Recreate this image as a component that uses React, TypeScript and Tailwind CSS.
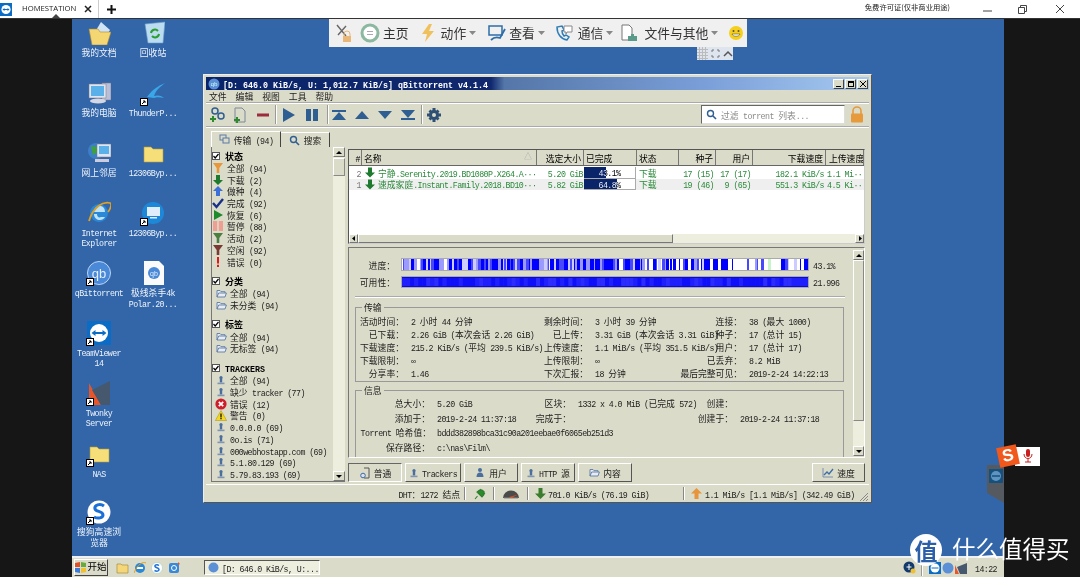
import React from "react";

const CJK = /([\u3000-\u9fff\uff00-\uffef]+)/;
const T = ({ s, className = "", b = false }: { s: string; className?: string; b?: boolean }) => {
  const parts = s.split(CJK).filter(Boolean);
  return (
    <span className={`whitespace-pre ${b ? "font-bold" : ""} ${className}`}>
      {parts.map((p, i) =>
        /[\u3000-\u9fff\uff00-\uffef]/.test(p) ? (
          <span key={i} className={b ? "text-[9px]" : "text-[8.8px]"}>{p}</span>
        ) : (
          <span key={i} className={b ? "text-[8.33px]" : "text-[8.3px] tracking-[-0.58px]"}>{p}</span>
        )
      )}
    </span>
  );
};

const rnd = (seed: number) => {
  let x = seed;
  return () => {
    x = (x * 16807) % 2147483647;
    return x / 2147483647;
  };
};

const ProgressBar = () => {
  const r = rnd(4242);
  const bars: { x: number; w: number; c: string }[] = [];
  let x = 0;
  while (x < 406) {
    const w = 1 + Math.floor(r() * (x > 320 ? 4 : 3));
    const dens = x < 240 ? 0.85 : x < 325 ? 0.6 : 0.22;
    const v = r();
    const inWhite = (x > 332 && x < 345) || (x > 360 && x < 372);
    let c = "#ffffff";
    if (!inWhite) {
      if (v < dens * 0.5) c = "#0000ff";
      else if (v < dens * 0.75) c = "#4848ff";
      else if (v < dens) c = "#9a9aff";
      else if (v < dens + 0.12) c = "#ccccff";
    }
    bars.push({ x, w, c });
    x += w;
  }
  return (
    <svg width="406" height="11" className="block">
      <rect width="406" height="11" fill="#fff" />
      {bars.map((b, i) => (
        <rect key={i} x={b.x} y="0" width={b.w} height="11" fill={b.c} />
      ))}
      <rect x="366" y="0" width="3" height="11" fill="#c8f5c8" />
    </svg>
  );
};

const AvailBar = () => {
  const r = rnd(77);
  const bars = Array.from({ length: 100 }, (_, i) => ({
    x: i * 4.06,
    c: r() > 0.7 ? "#2c2cff" : r() > 0.5 ? "#1010f8" : "#2020fc",
  }));
  return (
    <svg width="406" height="10" className="block">
      <rect width="406" height="10" fill="#2222fc" />
      {bars.map((b, i) => (
        <rect key={i} x={b.x} y="0" width="4.06" height="10" fill={b.c} />
      ))}
      <rect y="0" width="406" height="1" fill="#0a0ad8" />
      <rect y="9" width="406" height="1" fill="#0a0ad8" />
    </svg>
  );
};

const Check = () => (
  <span className="w-[8px] h-[8px] bg-white border border-[#555] flex items-center justify-center shrink-0">
    <svg width="6" height="6" viewBox="0 0 6 6"><path d="M0.5 3l1.7 2L5.5 1" stroke="#000" strokeWidth="1.2" fill="none" /></svg>
  </span>
);

const Folder = () => (
  <svg width="11" height="9" viewBox="0 0 11 9"><path d="M1 8V1.5h3l1 1.2h4V4M1 8l1.7-4H10.4L9 8z" fill="#e8ecf2" stroke="#5c7aa5" strokeWidth="0.9" /></svg>
);
const Person = () => (
  <svg width="10" height="10" viewBox="0 0 10 10"><circle cx="5" cy="2.5" r="1.6" fill="#4a6f9c" /><rect x="3.8" y="3" width="2.4" height="4.5" fill="#4a6f9c" /><rect x="1.5" y="7.6" width="7" height="1.6" fill="#7f95b3" /></svg>
);

type Ic = { k: string };
const StatusIcon = ({ k }: Ic) => {
  const p: Record<string, React.ReactNode> = {
    all: <path d="M1 1h10L7.3 6v5H4.7V6z" fill="#e8963a" />,
    down: <path d="M4 1h4v5h3L6 11 1 6h3z" fill="#1d7a2e" />,
    up: <path d="M6 1l5 5H8v5H4V6H1z" fill="#3d6fd8" />,
    done: <path d="M1 6l3.5 4L11 2" stroke="#1a2f8a" strokeWidth="2.4" fill="none" />,
    resume: <path d="M2 1l9 5-9 5z" fill="#1f8a2c" />,
    pause: <path d="M1 1h4.2v10H1zM6.8 1H11v10H6.8z" fill="#ee9e92" />,
    active: <path d="M1 1h10L7.3 6v5H4.7V6z" fill="#4b7f42" />,
    idle: <path d="M1 1h10L7.3 6v5H4.7V6z" fill="#7a3a34" />,
    err: <path d="M5 1h2v6.4H5zM5 8.8h2V11H5z" fill="#e01818" />,
  };
  return <svg width="12" height="12" viewBox="0 0 12 12">{p[k]}</svg>;
};

const Row = ({ icon, text, iw = "w-[18px] justify-center" }: { icon: React.ReactNode; text: string; iw?: string }) => (
  <div className="h-[11.72px] flex items-center leading-none">
    <span className={`${iw} flex items-center shrink-0`}>{icon}</span>
    <T s={text} className="text-[#222]" />
  </div>
);

const Sect = ({ title, mt = "mt-[7px]" }: { title: string; mt?: string }) => (
  <div className={`h-[13px] flex items-center gap-[5px] ${mt}`}>
    <Check />
    <T s={title} b className="text-black" />
  </div>
);

const SI = "w-[15px] justify-start";

const Sidebar = () => (
  <div className="w-[134px] flex h-full">
    <div className="w-[122px] border-l border-b border-[#777] overflow-hidden pt-[2px]">
      <Sect title="状态" mt="mt-0" />
      <Row iw={SI} icon={<StatusIcon k="all" />} text="全部 (94)" />
      <Row iw={SI} icon={<StatusIcon k="down" />} text="下载 (2)" />
      <Row iw={SI} icon={<StatusIcon k="up" />} text="做种 (4)" />
      <Row iw={SI} icon={<StatusIcon k="done" />} text="完成 (92)" />
      <Row iw={SI} icon={<StatusIcon k="resume" />} text="恢复 (6)" />
      <Row iw={SI} icon={<StatusIcon k="pause" />} text="暂停 (88)" />
      <Row iw={SI} icon={<StatusIcon k="active" />} text="活动 (2)" />
      <Row iw={SI} icon={<StatusIcon k="idle" />} text="空闲 (92)" />
      <Row iw={SI} icon={<StatusIcon k="err" />} text="错误 (0)" />
      <Sect title="分类" />
      <Row icon={<Folder />} text="全部 (94)" />
      <Row icon={<Folder />} text="未分类 (94)" />
      <Sect title="标签" />
      <Row icon={<Folder />} text="全部 (94)" />
      <Row icon={<Folder />} text="无标签 (94)" />
      <Sect title="TRACKERS" />
      <Row icon={<Person />} text="全部 (94)" />
      <Row icon={<Person />} text="缺少 tracker (77)" />
      <Row
        icon={<svg width="12" height="12" viewBox="0 0 12 12"><circle cx="6" cy="6" r="5.6" fill="#cc1f2a" /><path d="M3.8 3.8l4.4 4.4M8.2 3.8L3.8 8.2" stroke="#fff" strokeWidth="1.7" /></svg>}
        text="错误 (12)"
      />
      <Row
        icon={<svg width="12" height="11" viewBox="0 0 12 11"><path d="M6 .5l5.6 10H.4z" fill="#f5d820" stroke="#a08a10" strokeWidth=".5" /><path d="M5.4 3.4h1.2v4H5.4zM5.4 8h1.2v1.2H5.4z" fill="#000" /></svg>}
        text="警告 (0)"
      />
      <Row icon={<Person />} text="0.0.0.0 (69)" />
      <Row icon={<Person />} text="0o.is (71)" />
      <Row icon={<Person />} text="000webhostapp.com (69)" />
      <Row icon={<Person />} text="5.1.80.129 (69)" />
      <Row icon={<Person />} text="5.79.83.193 (69)" />
    </div>
    <div className="w-[12px] flex flex-col bg-[#eeeedf] border-b border-[#777]">
      <ScrollBtn dir="up" />
      <div className="h-[18px] mt-[1px] bg-[#dbdbc9] border border-t-white border-l-white border-r-[#888] border-b-[#888]" />
      <div className="flex-1" />
      <ScrollBtn dir="down" />
    </div>
  </div>
);

const ScrollBtn = ({ dir }: { dir: "up" | "down" | "left" | "right" }) => {
  const d = { up: "M1 5l3-3 3 3z", down: "M1 2l3 3 3-3z", left: "M5 1L2 4l3 3z", right: "M3 1l3 3-3 3z" }[dir];
  return (
    <div className="w-full h-[10px] shrink-0 bg-[#dbdbc9] border border-t-white border-l-white border-r-[#777] border-b-[#777] flex items-center justify-center">
      <svg width="8" height="7" viewBox="0 0 8 7"><path d={d} fill="#000" /></svg>
    </div>
  );
};

const cols = [
  { t: "#", w: "w-[13px]", a: "justify-end pr-[1px]" },
  { t: "名称", w: "w-[175px]", a: "justify-start pl-[2px]" },
  { t: "选定大小", w: "w-[47px]", a: "justify-end pr-[2px]" },
  { t: "已完成", w: "w-[53px]", a: "justify-start pl-[2px]" },
  { t: "状态", w: "w-[42px]", a: "justify-start pl-[2px]" },
  { t: "种子", w: "w-[37px]", a: "justify-end pr-[2px]" },
  { t: "用户", w: "w-[37px]", a: "justify-end pr-[2px]" },
  { t: "下载速度", w: "w-[73px]", a: "justify-end pr-[2px]" },
  { t: "上传速度", w: "w-[38px]", a: "justify-start pl-[3px]" },
];

const Pct = ({ pct, label }: { pct: number; label: string }) => (
  <div
    className="w-[52px] h-full border-r border-b border-[#aaa] text-center leading-[11px]"
    style={{ backgroundImage: `linear-gradient(90deg,#0a246a ${pct}%,#fff ${pct}%)` }}
  >
    <div
      className="w-full bg-clip-text text-transparent"
      style={{ backgroundImage: `linear-gradient(90deg,#fff ${pct}%,#000 ${pct}%)` }}
    >
      <T s={label} />
    </div>
  </div>
);

const TorrentRow = ({ d, bg }: { d: any; bg: string }) => (
  <div className={`flex h-[11.6px] items-center text-[#2a8a3a] leading-none ${bg}`}>
    <span className="w-[13px] text-right pr-[1px] text-[#777]"><T s={d.n} /></span>
    <span className="w-[175px] flex items-center pl-[3px] overflow-hidden">
      <svg width="10" height="11" viewBox="0 0 10 11" className="shrink-0 mr-[3px]"><path d="M3 .5h4v5h3L5 10.5 0 5.5h3z" fill="#1d7a2e" /></svg>
      <T s={d.name} />
    </span>
    <span className="w-[47px] text-right pr-[1px]"><T s={d.size} /></span>
    <span className="w-[53px] h-full"><Pct pct={d.pct} label={d.label} /></span>
    <span className="w-[42px] pl-[2px]"><T s="下载" /></span>
    <span className="w-[37px] text-right pr-[2px]"><T s={d.seeds} /></span>
    <span className="w-[37px] text-right pr-[2px]"><T s={d.peers} /></span>
    <span className="w-[73px] text-right pr-[2px]"><T s={d.dl} /></span>
    <span className="w-[38px] pl-[1px] overflow-hidden"><T s={d.ul} /></span>
  </div>
);

const TorrentList = () => (
  <div className="h-[95px] mt-[2px] border border-t-[#555] border-l-[#555] border-r-[#ccc] border-b-[#ccc] bg-white flex flex-col">
    <div className="flex h-[16px] bg-[#dbdbc9] border-b border-[#666] shrink-0">
      {cols.map((c, i) => (
        <div key={i} className={`${c.w} ${c.a} flex items-center border-r border-[#777] shrink-0 relative text-black overflow-hidden leading-none`}>
          <T s={c.t} />
          {i === 1 && <span className="absolute right-[4px] top-[3px] text-[8px] text-[#aaa]">△</span>}
        </div>
      ))}
    </div>
    <div className="flex-1 pt-[1px]">
      <TorrentRow
        bg="bg-white"
        d={{ n: "2", name: "宁静.Serenity.2019.BD1080P.X264.A···", size: "5.20 GiB", pct: 43.1, label: "43.1%", seeds: "17 (15)", peers: "17 (17)", dl: "182.1 KiB/s", ul: "1.1 Mi··" }}
      />
      <TorrentRow
        bg="bg-[#efefef]"
        d={{ n: "1", name: "速成家庭.Instant.Family.2018.BD10···", size: "5.82 GiB", pct: 64.8, label: "64.8%", seeds: "19 (46)", peers: "9 (65)", dl: "551.3 KiB/s", ul: "4.5 Ki··" }}
      />
    </div>
    <div className="h-[9px] flex bg-[#eeeedf] shrink-0">
      <div className="w-[9px]"><div className="h-[9px] bg-[#dbdbc9] border border-t-white border-l-white border-r-[#777] border-b-[#777] flex items-center justify-center"><svg width="6" height="7" viewBox="0 0 6 7"><path d="M4 1L1 3.5 4 6z" fill="#000" /></svg></div></div>
      <div className="w-[315px] bg-[#dbdbc9] border border-t-white border-l-white border-r-[#777] border-b-[#777]" />
      <div className="flex-1" />
      <div className="w-[9px] h-[9px] bg-[#dbdbc9] border border-t-white border-l-white border-r-[#777] border-b-[#777] flex items-center justify-center"><svg width="6" height="7" viewBox="0 0 6 7"><path d="M2 1l3 2.5L2 6z" fill="#000" /></svg></div>
    </div>
  </div>
);

const L = ({ s }: { s: string }) => <div className="text-right pr-[7px] text-[#222]"><T s={s} /></div>;
const V = ({ s, c = "" }: { s: string; c?: string }) => <div className={`text-[#222] whitespace-nowrap ${c}`}><T s={s} /></div>;

const transfer = [
  ["活动时间：", "2 小时 44 分钟", "剩余时间：", "3 小时 39 分钟", "连接：", "38 (最大 1000)"],
  ["已下载：", "2.26 GiB (本次会话 2.26 GiB)", "已上传：", "3.31 GiB (本次会话 3.31 GiB)", "种子：", "17 (总计 15)"],
  ["下载速度：", "215.2 KiB/s (平均 239.5 KiB/s)", "上传速度：", "1.1 MiB/s (平均 351.5 KiB/s)", "用户：", "17 (总计 17)"],
  ["下载限制：", "∞", "上传限制：", "∞", "已丢弃：", "8.2 MiB"],
  ["分享率：", "1.46", "下次汇报：", "18 分钟", "最后完整可见：", "2019-2-24 14:22:13"],
];

const Details = () => (
  <div className="h-[211px] mt-[3px] border border-t-[#777] border-l-[#777] border-r-white border-b-white flex overflow-hidden">
    <div className="flex-1 min-w-0 overflow-hidden">
      <div className="pt-[10px]">
        <div className="flex items-center h-[13px]">
          <div className="w-[46px] text-right"><T s="进度：" className="text-[#222]" /></div>
          <div className="ml-[6px] w-[408px] border border-[#aaa] bg-white"><ProgressBar /></div>
          <div className="ml-[4px] text-[#222]"><T s="43.1%" /></div>
        </div>
        <div className="flex items-center h-[12px] mt-[5px]">
          <div className="w-[46px] text-right"><T s="可用性：" className="text-[#222]" /></div>
          <div className="ml-[6px] w-[408px] border border-[#aaa]"><AvailBar /></div>
          <div className="ml-[4px] text-[#222]"><T s="21.996" /></div>
        </div>
      </div>
      <div className="ml-[6px] w-[490px] h-[2px] mt-[8px] border-t border-b border-t-[#aaa] border-b-white" />
      <div className="relative ml-[6px] w-[489px] h-[75px] mt-[9px] border border-[#999] pt-[6px]">
        <span className="absolute left-[6px] top-[-6px] bg-[#dbdbc9] px-[2px] leading-[11px]"><T s="传输" className="text-[#222]" /></span>
        <div className="grid grid-cols-[55px_129px_55px_85px_69px_1fr] auto-rows-[13.2px] items-center leading-none">
          {transfer.flatMap((r, i) => [
            <L key={i + "a"} s={r[0]} />, <V key={i + "b"} s={r[1]} />,
            <L key={i + "c"} s={r[2]} />, <V key={i + "d"} s={r[3]} />,
            <L key={i + "e"} s={r[4]} />, <V key={i + "f"} s={r[5]} />,
          ])}
        </div>
      </div>
      <div className="relative ml-[6px] w-[489px] h-[80px] mt-[8px] border border-[#999] pt-[5px]">
        <span className="absolute left-[6px] top-[-6px] bg-[#dbdbc9] px-[2px] leading-[11px]"><T s="信息" className="text-[#222]" /></span>
        <div className="grid grid-cols-[81px_83px_58px_102px_60px_1fr] auto-rows-[14.6px] items-center leading-none">
          <L s="总大小：" /><V s="5.20 GiB" /><L s="区块：" /><V s="1332 x 4.0 MiB (已完成 572)" /><L s="创建：" /><V s="" />
          <L s="添加于：" /><V s="2019-2-24 11:37:18" /><L s="完成于：" /><V s="" /><L s="创建于：" /><V s="2019-2-24 11:37:18" />
          <div className="text-right pr-[6px] whitespace-nowrap text-[#222]"><T s="Torrent 哈希值：" /></div><V s="bddd382898bca31c90a201eebae0f6065eb251d3" c="col-span-5" />
          <L s="保存路径：" /><V s="c:\nas\Film\" c="col-span-5" />
        </div>
      </div>
    </div>
    <div className="w-[11px] flex flex-col pt-[2px] pb-[1px] shrink-0">
      <ScrollBtn dir="up" />
      <div className="h-[161px] bg-[#dbdbc9] border border-t-white border-l-white border-r-[#888] border-b-[#888]" />
      <div className="flex-1 bg-[#eeeedf]" />
      <ScrollBtn dir="down" />
    </div>
  </div>
);

const TabBtn = ({ icon, s, w, act = false, ml = "ml-[3px]" }: { icon: React.ReactNode; s: string; w: string; act?: boolean; ml?: string }) => (
  <div className={`${w} ${ml} h-[19px] flex items-center justify-center gap-[3px] border leading-none shrink-0 ${act ? "border-t-[#666] border-l-[#666] border-r-white border-b-white" : "border-t-white border-l-white border-r-[#555] border-b-[#555]"}`}>
    {icon}
    <T s={s} className="text-[#222]" />
  </div>
);

const BottomTabs = () => (
  <div className="flex mt-[5px] h-[19px]">
    <TabBtn w="w-[54px]" ml="ml-0" act s="普通" icon={<svg width="12" height="12" viewBox="0 0 12 12"><path d="M5 1h5v10H5" fill="none" stroke="#555" /><circle cx="4" cy="8.5" r="2.3" fill="#dde" stroke="#3a6ea5" /></svg>} />
    <TabBtn w="w-[56px]" s="Trackers" icon={<Person />} />
    <TabBtn w="w-[54px]" s="用户" icon={<svg width="11" height="11" viewBox="0 0 11 11"><circle cx="5" cy="3" r="2" fill="#4a6f9c" /><path d="M1.5 10c0-3 1.5-4.4 3.5-4.4S8.5 7 8.5 10z" fill="#4a6f9c" /></svg>} />
    <TabBtn w="w-[54px]" s="HTTP 源" icon={<Person />} />
    <TabBtn w="w-[54px]" s="内容" icon={<Folder />} />
    <div className="flex-1" />
    <TabBtn w="w-[53px]" s="速度" icon={<svg width="12" height="11" viewBox="0 0 12 11"><path d="M1 1v9h10" stroke="#7a8fb0" fill="none" /><path d="M2 8l3-3 2 2 4-5" stroke="#3a6ea5" strokeWidth="1.3" fill="none" /></svg>} />
  </div>
);

const Sep = () => <div className="w-[2px] h-[13px] border-l border-r border-l-[#888] border-r-white shrink-0" />;

const StatusBar = () => (
  <div className="h-[18px] flex items-center leading-none border-t border-white mt-[2px] -mb-[2px] relative">
    <div className="w-[258px] text-right pr-[4px]"><T s="DHT：1272 结点" className="text-[#222]" /></div>
    <Sep />
    <div className="w-[27px] flex justify-center">
      <svg width="12" height="12" viewBox="0 0 12 12"><path d="M1 11l2.5-3M3 4l5 5 2-2.5V3.5L8 2 5.5 2zM7 1L5.5 3M11 5L9 6.5" stroke="#2d7d2d" strokeWidth="1.1" fill="#2d8a2d" /></svg>
    </div>
    <Sep />
    <div className="w-[32px] flex justify-center">
      <svg width="18" height="10" viewBox="0 0 18 10"><path d="M1 9a8 7.5 0 0 1 16 0z" fill="#4a4a4a" /><path d="M7 8l9-2.5-7 3.8z" fill="#e0471c" /><path d="M2 9h14" stroke="#888" /></svg>
    </div>
    <Sep />
    <div className="w-[154px] flex items-center pl-[6px] gap-[2px]">
      <svg width="11" height="11" viewBox="0 0 11 11" className="shrink-0"><path d="M3.5 0h4v5.5H11L5.5 11 0 5.5h3.5z" fill="#3b7d2e" /></svg>
      <T s="701.0 KiB/s (76.19 GiB)" className="text-[#222]" />
    </div>
    <Sep />
    <div className="flex items-center pl-[6px] gap-[3px]">
      <svg width="11" height="11" viewBox="0 0 11 11" className="shrink-0"><path d="M5.5 0L11 5.5H7.5V11h-4V5.5H0z" fill="#e8943a" /></svg>
      <T s="1.1 MiB/s [1.1 MiB/s] (342.49 GiB)" className="text-[#222]" />
    </div>
    <svg width="10" height="10" viewBox="0 0 10 10" className="absolute right-0 bottom-0"><path d="M9 1L1 9M9 4L4 9M9 7L7 9" stroke="#888" /></svg>
  </div>
);

const TB = ({ children }: { children: React.ReactNode }) => (
  <svg width="20" height="18" viewBox="0 0 20 18" className="shrink-0">{children}</svg>
);
const Blue = "#2f5f92";
const VSep = ({ c = "" }: { c?: string }) => <div className={`w-[2px] h-[19px] border-l border-r border-l-[#999] border-r-white shrink-0 ${c}`} />;

const Toolbar = () => (
  <div className="h-[25px] flex items-center pl-[1px] border-t border-b border-t-[#aaa] border-b-[#aaa] shadow-[inset_0_1px_0_#fff,0_1px_0_#fff]">
    <div className="flex items-center gap-[3px]">
      <TB><circle cx="8" cy="5" r="3" fill="none" stroke={Blue} strokeWidth="1.5" /><circle cx="14" cy="10" r="3" fill="none" stroke={Blue} strokeWidth="1.5" /><path d="M6 10v6M3 13h6" stroke="#2f8a2f" strokeWidth="2" /></TB>
      <TB><path d="M5 2h7l3 3v11H5z" fill="none" stroke="#7a8a9a" /><path d="M7 11v6M4 14h6" stroke="#2f8a2f" strokeWidth="2" /></TB>
      <TB><rect x="4" y="7.5" width="12" height="3" fill="#9c2b3c" /></TB>
    </div>
    <VSep c="ml-[2px] mr-[2px]" />
    <div className="flex items-center gap-[3px]">
      <TB><path d="M4 2l12 7-12 7z" fill={Blue} /></TB>
      <TB><path d="M4 3h5v12H4zM11 3h5v12h-5z" fill={Blue} /></TB>
    </div>
    <VSep c="ml-[5px] mr-0" />
    <div className="flex items-center gap-[3px]">
      <TB><path d="M3 4h14v2H3zM10 6l7 8H3z" fill={Blue} /></TB>
      <TB><path d="M10 5l7 8H3z" fill={Blue} /></TB>
      <TB><path d="M3 5h14l-7 8z" fill={Blue} /></TB>
      <TB><path d="M3 4h14l-7 8zM3 12h14v2H3z" fill={Blue} /></TB>
    </div>
    <VSep c="ml-[3px] mr-[1px]" />
    <TB>
      <g fill="#2f4f74">
        <circle cx="10" cy="9" r="5" />
        <path d="M8.5 2h3v3h-3zM8.5 13h3v3h-3zM3 7.5h3v3H3zM14 7.5h3v3h-3z" />
        <path d="M4.500 5.500l2-2 2 2-2 2zM13.500 3.500l2 2-2 2-2-2zM4.500 12.500l2-2 2 2-2 2zM13.500 10.500l2 2-2 2-2-2z" />
      </g>
      <circle cx="10" cy="9" r="2" fill="#dbdbc9" />
    </TB>
    <div className="flex-1" />
    <div className="w-[144px] h-[19px] bg-white border border-t-[#666] border-l-[#666] border-r-[#ddd] border-b-[#ddd] flex items-center pl-[4px] gap-[4px] leading-none">
      <svg width="11" height="11" viewBox="0 0 11 11"><circle cx="4.500" cy="4.500" r="3" fill="none" stroke="#2f5f92" strokeWidth="1.400" /><path d="M7 7l3 3" stroke="#2f5f92" strokeWidth="1.600" /></svg>
      <T s="过滤 torrent 列表..." className="text-[#8a8a8a]" />
    </div>
    <div className="w-[24px] flex justify-center">
      <svg width="16" height="18" viewBox="0 0 16 18"><path d="M4 8V5a4 4 0 0 1 8 0v3" fill="none" stroke="#e69a3c" strokeWidth="1.600" /><rect x="2" y="7.500" width="12" height="9" rx="1" fill="#e69a3c" /></svg>
    </div>
  </div>
);

const Tabs = () => (
  <div className="h-[20px] flex items-end pl-[5px] pt-[4px]">
    <div className="w-[70px] h-[16px] border-t border-l border-r border-t-white border-l-white border-r-[#444] flex items-center justify-center gap-[4px] leading-none">
      <svg width="11" height="11" viewBox="0 0 11 11"><rect x="1" y="1" width="6" height="5" fill="none" stroke="#5c7aa5" /><rect x="4" y="4" width="6" height="5" fill="#dbdbc9" stroke="#5c7aa5" /></svg>
      <T s="传输 (94)" className="text-[#222]" />
    </div>
    <div className="w-[49px] h-[15px] border-t border-r border-t-white border-r-[#444] flex items-center justify-center gap-[4px] leading-none">
      <svg width="11" height="11" viewBox="0 0 11 11"><circle cx="4.500" cy="4.500" r="3" fill="none" stroke="#2f5f92" strokeWidth="1.400" /><path d="M7 7l3 3" stroke="#2f5f92" strokeWidth="1.600" /></svg>
      <T s="搜索" className="text-[#222]" />
    </div>
  </div>
);

const WinBtn = ({ children }: { children: React.ReactNode }) => (
  <div className="w-[11px] h-[10px] bg-[#dbdbc9] border border-t-white border-l-white border-r-[#444] border-b-[#444] flex items-center justify-center">{children}</div>
);

const QbWindow = () => (
  <div className="absolute left-[131px] top-[55px] w-[669px] h-[429px] bg-[#dbdbc9] border border-t-[#eee] border-l-[#eee] border-r-[#555] border-b-[#555] p-[2px] flex flex-col">
    <div className="h-[13px] shrink-0 bg-[linear-gradient(90deg,#0a246a_0%,#10296e_43%,#5476a8_45%,#7a9ed8_75%,#a6caf0_100%)] flex items-center pl-[2px] leading-none">
      <svg width="12" height="12" viewBox="0 0 12 12" className="shrink-0"><circle cx="6" cy="6" r="5.500" fill="#5b8fd6" /><text x="6" y="8" fontSize="6" textAnchor="middle" fill="#cfe">qb</text></svg>
      <T s="[D: 646.0 KiB/s, U: 1,012.7 KiB/s] qBittorrent v4.1.4" b className="ml-[3px] text-white" />
      <div className="flex-1" />
      <div className="flex gap-[1px] mr-[1px]">
        <WinBtn><span className="w-[5px] h-[1px] mt-[5px] bg-black" /></WinBtn>
        <WinBtn><span className="w-[6px] h-[6px] border border-black border-t-2" /></WinBtn>
        <WinBtn><svg width="6" height="6" viewBox="0 0 6 6"><path d="M0 0l6 6M6 0L0 6" stroke="#000" /></svg></WinBtn>
      </div>
    </div>
    <div className="h-[12px] shrink-0 flex items-center pl-[3px] gap-[9px] leading-none">
      {["文件", "编辑", "视图", "工具", "帮助"].map((m) => <T key={m} s={m} className="text-[#222]" />)}
    </div>
    <Toolbar />
    <Tabs />
    <div className="h-[335px] flex shrink-0 pl-[5px]">
      <Sidebar />
      <div className="w-[517px] ml-[3px] flex flex-col">
        <TorrentList />
        <Details />
        <BottomTabs />
      </div>
    </div>
    <StatusBar />
  </div>
);

/* desktop icons */
const Sc = () => (
  <span className="absolute left-[-1px] bottom-[-1px] w-[8px] h-[8px] bg-white border border-black flex items-center justify-center">
    <svg width="6" height="6" viewBox="0 0 6 6"><path d="M1 5l3-3M2 2h2v2" stroke="#000" strokeWidth="1" fill="none" /></svg>
  </span>
);

const icons: { l: number; t: number; lines: string[]; sc?: boolean; g: React.ReactNode }[] = [
  { l: 0, t: 2, lines: ["我的文档"], g: <g><path d="M14 1l9 8-5 8-10-6z" fill="#cfe3f5" /><path d="M2 8h9l2 3h11l-4 13H5z" fill="#f4d672" stroke="#b08a2c" strokeWidth=".6" /></g> },
  { l: 54, t: 2, lines: ["回收站"], g: <g><path d="M4 3l20-2-2 21H7z" fill="#bcdcf2" stroke="#6a9cc0" strokeWidth=".6" /><path d="M10 12a4 4 0 0 1 7-2M18 13a4 4 0 0 1-7 2" stroke="#2aa02a" strokeWidth="2" fill="none" /></g> },
  { l: 0, t: 62, lines: ["我的电脑"], g: <g><rect x="15" y="2" width="9" height="17" fill="#b9bfd4" stroke="#778" strokeWidth=".5" /><rect x="2" y="3" width="17" height="14" fill="#dfe5f0" stroke="#778" strokeWidth=".5" /><rect x="4" y="5" width="13" height="10" fill="#5ab0e8" /><ellipse cx="11" cy="20" rx="8" ry="2.500" fill="#d5d8e2" /></g> },
  { l: 54, t: 62, lines: ["ThunderP..."], sc: true, g: <g><path d="M6 16C12 8 17 5 24 2c-5 4-9 7-11 13 3-1 7-1 10 2-4-1-8-1-10 0z" fill="#3aa8e8" /></g> },
  { l: 0, t: 122, lines: ["网上邻居"], g: <g><circle cx="9" cy="10" r="8" fill="#3c7fc8" /><path d="M4 5l6 1 1 5-5 3z" fill="#3fa040" /><rect x="10" y="3" width="14" height="13" fill="#dfe5f0" stroke="#778" strokeWidth=".5" /><rect x="12" y="5" width="10" height="8" fill="#5ab0e8" /><rect x="8" y="18" width="14" height="3" fill="#ccd" /></g> },
  { l: 54, t: 122, lines: ["12306Byp..."], g: <path d="M3 6h7l2 2h10v13H3z" fill="#f6de78" stroke="#b79a3a" strokeWidth=".6" /> },
  { l: 0, t: 182, lines: ["Internet", "Explorer"], g: <g><circle cx="12" cy="12" r="9" fill="#2a88d8" /><path d="M7 11h11c0-5-3-6-5.500-6S7 7 7 11zm0 2c0 4 3 6 6 6 2 0 4-1 5-3h-4c-2 1-4 0-4-3z" fill="#bfe3f8" /><path d="M2 20C6 6 16 0 23 2c2 1 1 5-2 9" fill="none" stroke="#e0a020" strokeWidth="1.800" /></g> },
  { l: 54, t: 182, lines: ["12306Byp..."], sc: true, g: <g><circle cx="12" cy="12" r="11" fill="#1e88d8" /><rect x="6" y="6" width="13" height="9" fill="#dfeefa" /><rect x="9" y="16" width="7" height="1.500" fill="#dfeefa" /></g> },
  { l: 0, t: 242, lines: ["qBittorrent"], sc: true, g: <g><circle cx="12" cy="12" r="11.500" fill="#4a88d8" stroke="#bcd6f2" /><text x="12" y="17" fontSize="13" textAnchor="middle" fill="#e4f0fb" fontFamily="'Liberation Sans'">qb</text></g> },
  { l: 54, t: 242, lines: ["极线杀手4k", "Polar.20..."], g: <g><path d="M3 0h15l5 5v19H3z" fill="#fafafa" /><circle cx="13" cy="12" r="6" fill="#4a88d8" /><text x="13" y="15" fontSize="7" textAnchor="middle" fill="#e4f0fb" fontFamily="'Liberation Sans'">qb</text></g> },
  { l: 0, t: 302, lines: ["TeamViewer", "14"], sc: true, g: <g><rect x="0" y="0" width="24" height="24" fill="#0a6cc4" /><circle cx="12" cy="12" r="9" fill="#fff" /><path d="M4.500 12l4-3v2h7V9l4 3-4 3v-2h-7v2z" fill="#0a6cc4" /></g> },
  { l: 0, t: 362, lines: ["Twonky", "Server"], sc: true, g: <g><path d="M2 2l12 22H2z" fill="#e5572a" /><path d="M23 0v24H14L5 9z" fill="#46586e" /></g> },
  { l: 0, t: 423, lines: ["NAS"], sc: true, g: <path d="M3 5h7l2 2h10v13H3z" fill="#f6de78" stroke="#b79a3a" strokeWidth=".6" /> },
  { l: 0, t: 481, lines: ["搜狗高速浏", "览器"], sc: true, g: <g><circle cx="12" cy="12" r="11.500" fill="#fff" /><path d="M17 6c-4-3-10-1-9 3 1 3 8 2 8 6 0 3-5 4-9 2" stroke="#1a70d8" strokeWidth="3" fill="none" /></g> },
];

const DeskIcon = ({ i }: { i: (typeof icons)[number] }) => (
  <div className="absolute w-[54px] flex flex-col items-center leading-[9px]" style={{ left: i.l, top: i.t }}>
    <span className="relative w-[24px] h-[24px] mb-[1px]">
      <svg width="24" height="24" viewBox="0 0 24 24">{i.g}</svg>
      {i.sc && <Sc />}
    </span>
    <div className="mt-[2px]">
      {i.lines.map((l, n) => (
        <div key={n} className="text-center text-[#eef3fa] whitespace-nowrap"><T s={l} /></div>
      ))}
    </div>
  </div>
);

const Caret = () => <svg width="7" height="4" viewBox="0 0 7 4" className="ml-[3px] shrink-0"><path d="M0 0h7L3.500 4z" fill="#888" /></svg>;
const RB = ({ s, c }: { s: string; c: string }) => <span className={`${c} whitespace-nowrap shrink-0`}>{s}</span>;

const RemoteBar = () => (
  <div className="absolute left-[257px] top-0 w-[418px] h-[28px] bg-[#f0f0f0] flex items-center text-[12.800px] text-[#333] font-['Noto_Sans_CJK_SC','Noto_Sans',sans-serif]">
    <svg width="18" height="20" viewBox="0 0 18 20" className="ml-[6px] shrink-0"><path d="M2 2l9 11M11 3L3 12" stroke="#666" strokeWidth="1.400" /><path d="M9 13v-2a3 3 0 0 1 6 0v2" fill="none" stroke="#e9b777" /><rect x="8" y="13" width="8" height="6" fill="#e9b777" /></svg>
    <svg width="20" height="20" viewBox="0 0 20 20" className="ml-[7px] shrink-0"><circle cx="10" cy="10" r="8" fill="#fff" stroke="#8cb8a0" strokeWidth="3" /><path d="M7 8.500h6M7 11.500h6" stroke="#aaa" /></svg>
    <RB s="主页" c="ml-[3px]" />
    <svg width="14" height="20" viewBox="0 0 14 20" className="ml-[12px] shrink-0"><path d="M8 1L1 11h5l-2 8 9-11H8l3-7z" fill="#f0c05c" /></svg>
    <RB s="动作" c="ml-[6px]" /><Caret />
    <svg width="18" height="18" viewBox="0 0 18 18" className="ml-[12px] shrink-0"><rect x="1" y="2" width="13" height="9" fill="none" stroke="#2d6da8" strokeWidth="1.500" /><path d="M3 16c3-3 6-3 9-2l5-9" stroke="#2d6da8" strokeWidth="1.800" fill="none" /></svg>
    <RB s="查看" c="ml-[3px]" /><Caret />
    <svg width="18" height="18" viewBox="0 0 18 18" className="ml-[10px] shrink-0"><path d="M2 3c0 7 4 12 10 13l2-3-3-2-2 1c-1-1-2-3-2-5l2-1-2-4z" fill="none" stroke="#2d7db8" strokeWidth="1.500" /><path d="M9 2h8v6h-5l-1 2V8H9z" fill="#fff" stroke="#888" /></svg>
    <RB s="通信" c="ml-[5px]" /><Caret />
    <svg width="18" height="18" viewBox="0 0 18 18" className="ml-[7px] shrink-0"><path d="M2 1h7l3 3v12H2z" fill="#fff" stroke="#777" /><path d="M8 17v-5h3v-2h3v2h3v5z" fill="#5a9a8a" /></svg>
    <RB s="文件与其他" c="ml-[6px]" /><Caret />
    <svg width="16" height="16" viewBox="0 0 16 16" className="ml-[10px] shrink-0"><circle cx="8" cy="8" r="7" fill="#f5cf1c" /><circle cx="5.500" cy="6" r="1" fill="#553" /><circle cx="10.500" cy="6" r="1" fill="#553" /><path d="M4 9c1 3 7 3 8 0z" fill="#fff" stroke="#553" strokeWidth=".6" /></svg>
  </div>
);

const Taskbar = () => (
  <div className="h-[21px] shrink-0 bg-[#dbdbc9] border-t-2 border-[#eef0f4] flex items-center leading-none relative">
    <div className="ml-[2px] w-[34px] h-[17px] border border-t-white border-l-white border-r-[#444] border-b-[#444] flex items-center justify-center gap-[1px]">
      <svg width="11" height="11" viewBox="0 0 11 11"><path d="M0 1l5-1v5H0z" fill="#e0502a" /><path d="M6 0l5 1v4H6z" fill="#6aaa3a" /><path d="M0 6h5v5L0 10z" fill="#3a7ad8" /><path d="M6 6h5v4l-5 1z" fill="#f0c030" /></svg>
      <span className="text-[9.500px] text-black">开始</span>
    </div>
    <div className="ml-[8px] flex items-center gap-[5px]">
      <svg width="13" height="12" viewBox="0 0 13 12"><path d="M1 2h4l1 1h6v8H1z" fill="#f5d77a" stroke="#a08030" strokeWidth=".6" /></svg>
      <svg width="12" height="12" viewBox="0 0 12 12"><circle cx="6" cy="6" r="5" fill="#2a88d8" /><path d="M3 6h6" stroke="#fff" strokeWidth="2" /><path d="M0 11C3 3 9-1 12 1" stroke="#e0a020" fill="none" /></svg>
      <svg width="12" height="12" viewBox="0 0 12 12"><circle cx="6" cy="6" r="5.500" fill="#fff" stroke="#9cc" strokeWidth=".5" /><path d="M8 3.500C6 2 3.500 3 4 4.500s4 1 4 3-2.500 2-4.500 1" stroke="#1a70d8" strokeWidth="1.500" fill="none" /></svg>
      <svg width="12" height="12" viewBox="0 0 12 12"><rect x="1" y="1" width="10" height="10" rx="2" fill="#3a88d8" /><circle cx="6" cy="6" r="2.500" fill="none" stroke="#fff" /><path d="M10 0l2 2-2 1z" fill="#e0502a" /></svg>
    </div>
    <div className="ml-[24px] w-[116px] h-[15px] bg-[#eeeedf] border border-t-[#555] border-l-[#555] border-r-white border-b-white flex items-center pl-[3px] gap-[3px]">
      <svg width="11" height="11" viewBox="0 0 11 11" className="shrink-0"><circle cx="5.500" cy="5.500" r="5" fill="#5b8fd6" /></svg>
      <T s="[D: 646.0 KiB/s, U:..." className="text-[#222]" />
    </div>
    <div className="flex-1" />
    <div className="flex items-center mr-[7px]">
      <svg width="13" height="13" viewBox="0 0 13 13" className="mr-[5px]"><circle cx="6" cy="6" r="5.500" fill="#123a6a" /><path d="M6 3v6M3.500 6h5" stroke="#fff" /><circle cx="10" cy="10" r="2.500" fill="#f0c030" /></svg>
      <div className="w-[2px] h-[16px] border-l border-r border-l-[#999] border-r-white mr-[6px]" />
      <svg width="12" height="12" viewBox="0 0 12 12" className="mr-[1px]"><rect width="12" height="12" fill="#0a6cc4" /><circle cx="6" cy="6" r="4.500" fill="#fff" /><path d="M2.500 6h7" stroke="#0a6cc4" /></svg>
      <svg width="12" height="12" viewBox="0 0 12 12" className="mr-[1px]"><circle cx="6" cy="6" r="5.500" fill="#5b8fd6" /></svg>
      <svg width="12" height="12" viewBox="0 0 12 12" className="mr-[8px]"><path d="M0 3l4 9H0z" fill="#e5572a" /><path d="M12 1v11H5L2 5z" fill="#46586e" /></svg>
      <T s="14:22" className="text-[#222]" />
    </div>
  </div>
);

export default function App() {
  return (
    <div className="w-[1080px] h-[577px] relative overflow-hidden flex flex-col bg-[#161616] blur-[0.3px] font-['Liberation_Mono','Noto_Sans_CJK_SC',monospace]">
      <div className="h-[19px] shrink-0 bg-white border-b border-[#333] flex items-center relative font-['Open_Sans','Noto_Sans_CJK_SC',sans-serif]">
        <svg width="12" height="13" viewBox="0 0 12 13" className="ml-0 shrink-0"><rect width="12" height="13" fill="#0a6cc4" /><circle cx="6" cy="6.500" r="4.600" fill="#fff" /><path d="M2.500 6.500l2-1.500v1h3V5l2 1.500-2 1.500V7h-3v1z" fill="#0a6cc4" /></svg>
        <div className="ml-[10px] text-[7.700px] text-[#222]">HOMESTATION</div>
        <svg width="8" height="8" viewBox="0 0 8 8" className="ml-[8px]"><path d="M1 1l6 6M7 1L1 7" stroke="#222" strokeWidth="1.500" /></svg>
        <div className="ml-[6px] w-[1px] h-[18px] bg-[#ccc]" />
        <svg width="9" height="9" viewBox="0 0 9 9" className="ml-[8px]"><path d="M4.500 0v9M0 4.500h9" stroke="#111" strokeWidth="2" /></svg>
        <span className="absolute left-[52px] bottom-0 w-0 h-0 border-l-[4px] border-r-[4px] border-b-[4px] border-l-transparent border-r-transparent border-b-[#444]" />
        <div className="flex-1" />
        <div className="text-[7.300px] text-[#222] font-['Noto_Sans_CJK_SC',sans-serif] mr-[33px] mb-[3px]">免费许可证(仅非商业用途)</div>
        <svg width="9" height="9" viewBox="0 0 9 9" className="mr-[26px]"><path d="M0 6h9" stroke="#444" /></svg>
        <svg width="9" height="9" viewBox="0 0 9 9" className="mr-[28px]"><path d="M0.500 2.500h6v6h-6zM2.500 2.500v-2h6v6h-2" fill="none" stroke="#444" /></svg>
        <svg width="10" height="10" viewBox="0 0 10 10" className="mr-[15px]"><path d="M1 1l8 8M9 1L1 9" stroke="#444" /></svg>
      </div>
      <div className="flex-1 flex min-h-0">
        <div className="w-[72px] shrink-0 bg-[#161616]" />
        <div className="w-[932px] shrink-0 flex flex-col bg-[#3366a9]">
          <div className="flex-1 relative">
            {icons.map((i, n) => <DeskIcon key={n} i={i} />)}
            <RemoteBar />
            <div className="absolute left-[625px] top-[28px] w-[36px] h-[13px] bg-[#dfe5ee] flex items-center gap-[3px]">
              <svg width="11" height="13" viewBox="0 0 11 13"><path d="M0 2.500h11M0 5.500h11M0 8.500h11M0 11.500h11M2.500 0v13M5.500 0v13M8.500 0v13" stroke="#bbb" /></svg>
              <svg width="9" height="9" viewBox="0 0 9 9"><path d="M1 3V1h2M6 1h2v2M8 6v2H6M3 8H1V6" stroke="#777" fill="none" /></svg>
              <svg width="10" height="7" viewBox="0 0 10 7"><path d="M1 6l4-4 4 4" stroke="#555" strokeWidth="1.500" fill="none" /></svg>
            </div>
            <QbWindow />
            <svg width="18" height="38" viewBox="0 0 18 38" className="absolute left-[914px] top-[446px]">
              <path d="M1 0h17v38L1 28z" fill="#555a60" />
              <rect x="3" y="4" width="14" height="14" fill="#16507f" />
              <circle cx="10" cy="11" r="5" fill="#5f94be" />
              <path d="M6 11h8" stroke="#16507f" strokeWidth="1.500" />
            </svg>
          </div>
          <Taskbar />
        </div>
        <div className="flex-1 bg-[#161616]" />
      </div>
      <div className="absolute left-[998px] top-[445px] w-[42px] h-[22px] flex items-center">
        <span className="w-[20px] h-[20px] -rotate-12 bg-[#f0581c] text-white font-bold text-[17px] leading-[20px] text-center z-10 font-['Liberation_Sans',sans-serif]">S</span>
        <span className="-ml-[3px] w-[25px] h-[19px] bg-white flex items-center justify-center">
          <svg width="10" height="14" viewBox="0 0 10 14"><rect x="3" y="0" width="4" height="8" rx="2" fill="#c81e1e" /><path d="M1 5c0 6 8 6 8 0M5 10v3M2 13h6" stroke="#c81e1e" fill="none" /></svg>
        </span>
      </div>
      <div className="absolute left-[910px] top-[534px] w-[32px] h-[32px] rounded-full bg-white flex items-center justify-center text-[#2b5fa8] text-[23px] leading-none font-bold font-['Noto_Sans_CJK_SC',sans-serif]">值</div>
      <div className="absolute left-[952px] top-[531px] text-white text-[23.500px] leading-[34px] whitespace-nowrap font-['Noto_Sans_CJK_SC',sans-serif]">什么值得买</div>
    </div>
  );
}
